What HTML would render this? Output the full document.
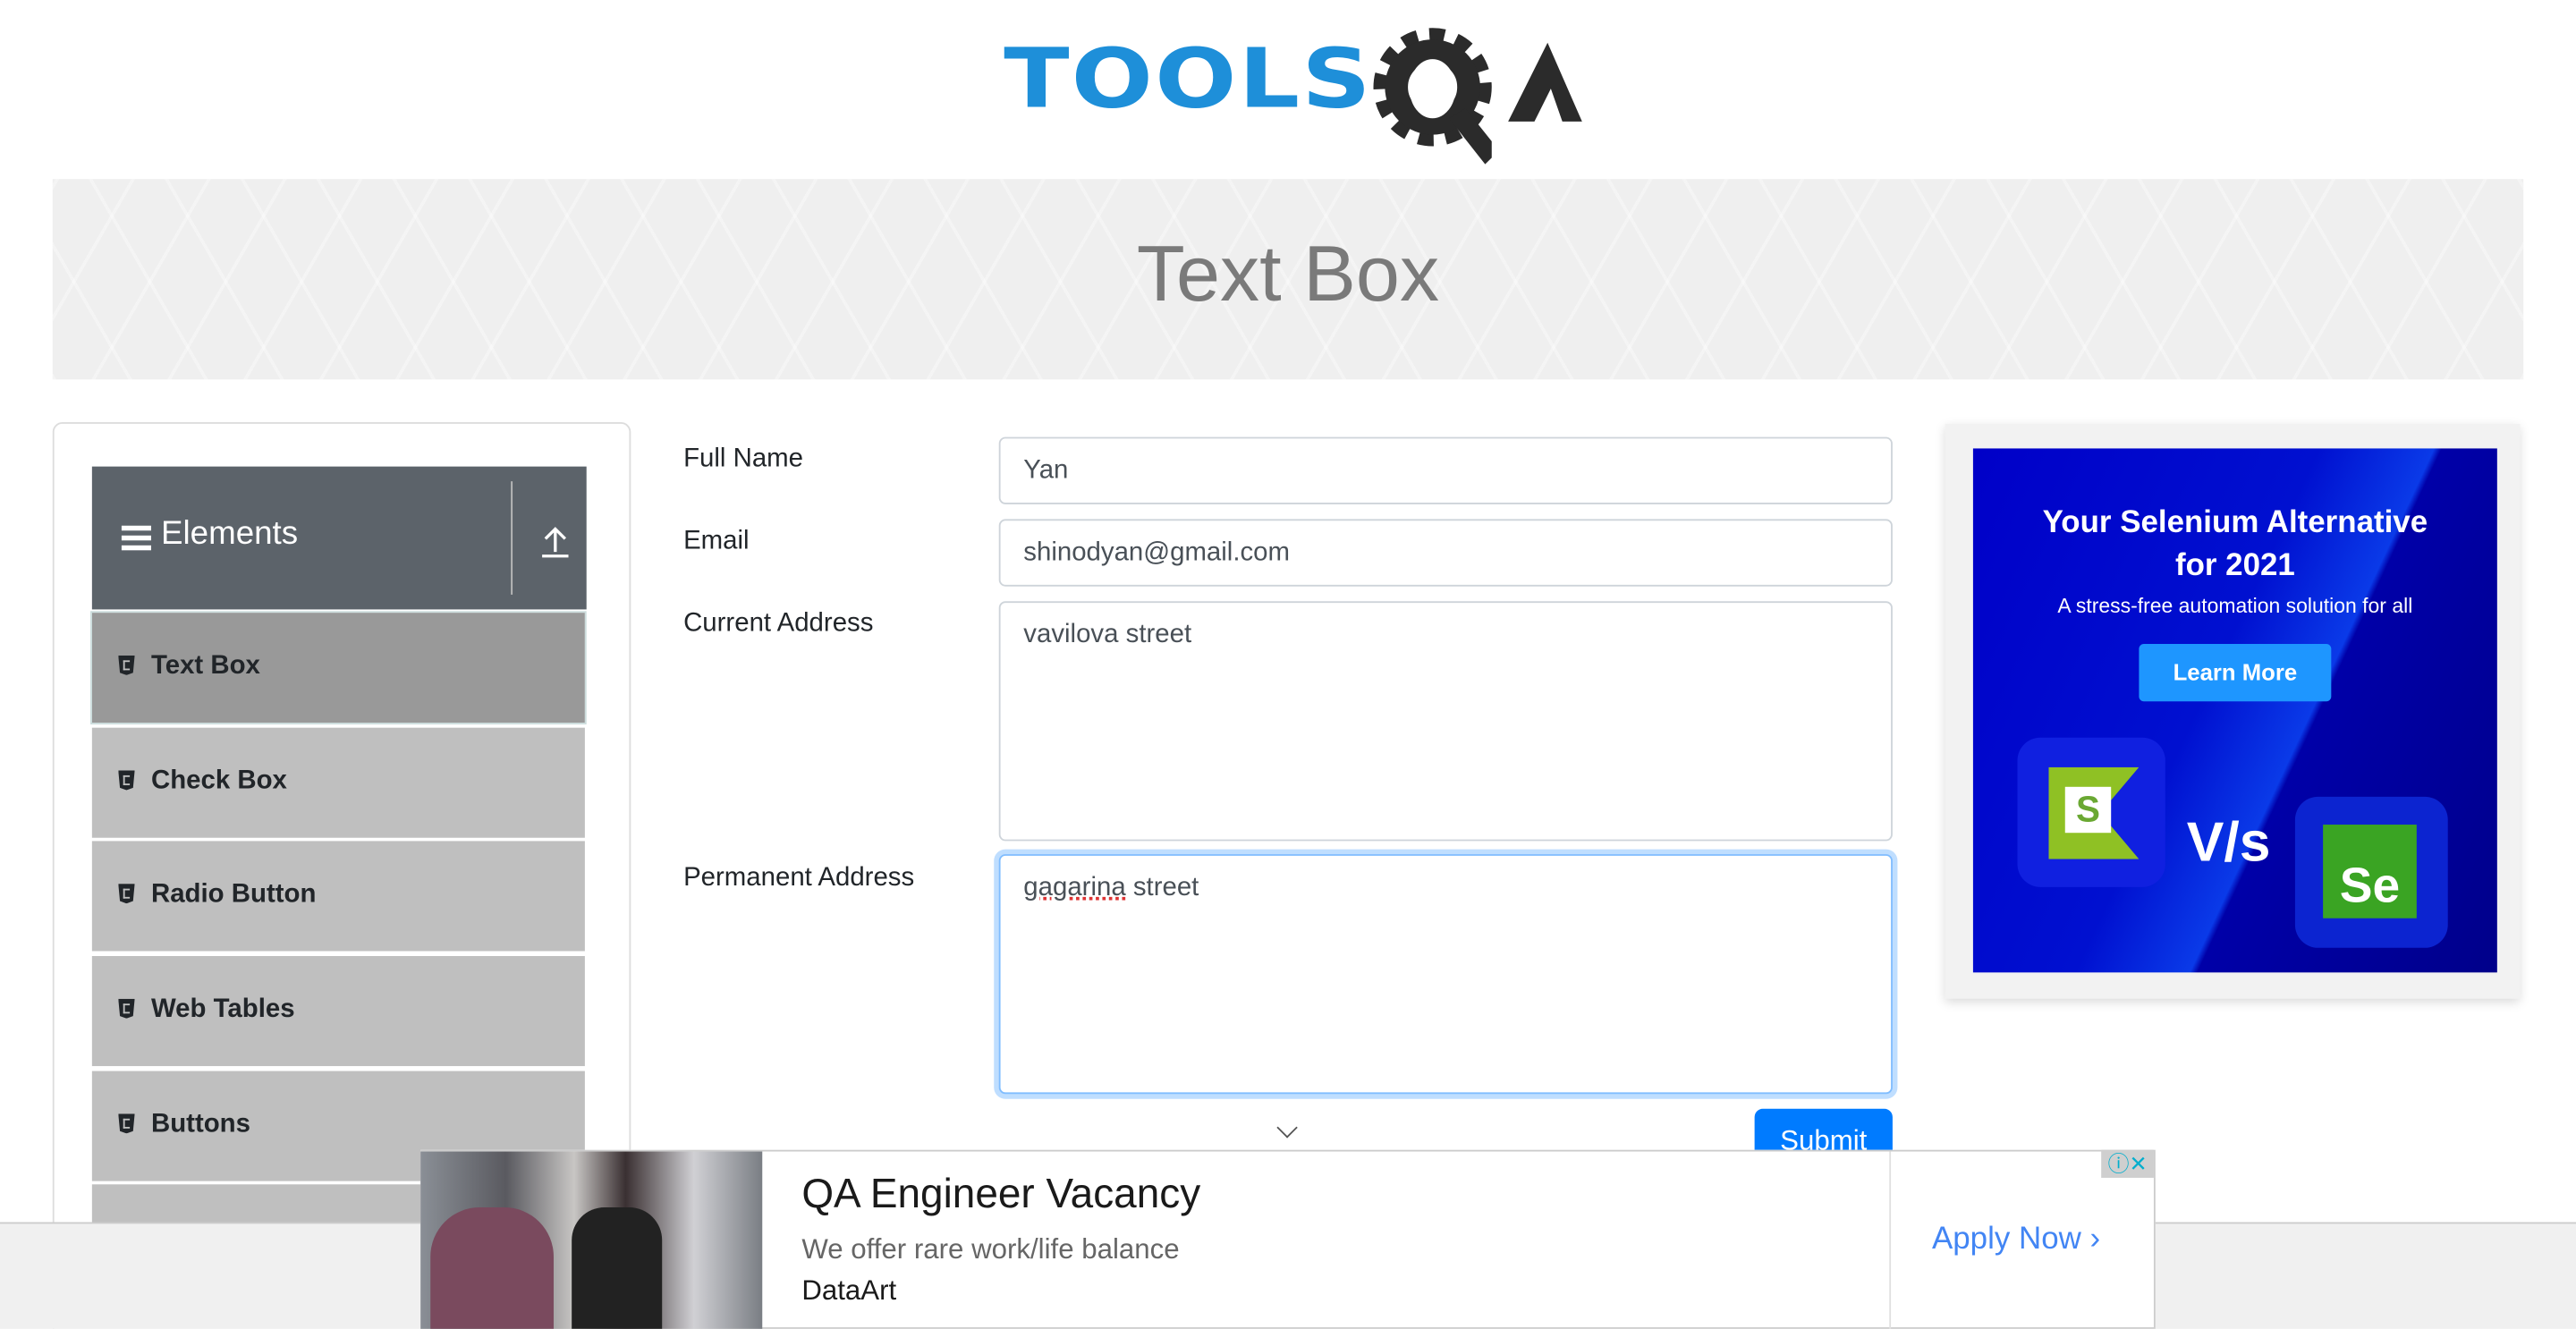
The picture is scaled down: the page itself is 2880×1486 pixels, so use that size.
<!DOCTYPE html>
<html><head><meta charset="utf-8"><style>
html,body{margin:0;padding:0;width:2880px;height:1486px;overflow:hidden;background:#fff;font-family:"Liberation Sans",Arial,sans-serif}
#o{position:absolute;left:0;top:0;width:2880px;height:1486px;overflow:hidden}
#w{position:absolute;left:0;top:0;width:1568px;height:809px;overflow:hidden;transform:scale(1.83673);transform-origin:0 0}
.a{position:absolute}
.lbl{position:absolute;left:416px;font-size:16px;color:#212529}
.inp{position:absolute;left:608px;width:544px;border:1px solid #ced4da;border-radius:4px;background:#fff;font-size:16px;color:#495057;box-sizing:border-box;padding:11px 14px}
.item{position:absolute;left:56px;width:300px;height:67px;background:#bfbfbf;font-weight:bold;font-size:16px;color:#212529;box-sizing:border-box;padding:24px 0 0 16px}
.sh{display:inline-block;width:10px;height:12px;background:#212529;clip-path:polygon(0 0,100% 0,90% 88%,50% 100%,10% 88%);margin-right:10px;vertical-align:-1px;position:relative}
.sh:after{content:"";position:absolute;left:3px;top:3px;width:4px;height:6px;border:1.3px solid #bfbfbf;border-width:1.3px 0 1.3px 1.3px;box-sizing:border-box}
</style></head><body><div id="o"><div id="w">
<!-- logo -->
<div class="a" style="left:611px;top:22px;font-weight:bold;font-size:50px;letter-spacing:1px;color:#1e8fd9;font-family:'DejaVu Sans',sans-serif;line-height:52px;transform:scaleX(1.17);transform-origin:0 0">TOOLS</div>
<svg class="a" style="left:832px;top:16px" width="135" height="84" viewBox="0 0 135 84">
<circle cx="40" cy="37" r="31" fill="none" stroke="#2b2b2b" stroke-width="10" stroke-dasharray="9 7"/>
<circle cx="40" cy="37" r="22" fill="none" stroke="#2b2b2b" stroke-width="14"/>
<ellipse cx="40" cy="38" rx="14" ry="18" fill="#fff"/>
<path d="M50 56 L72 84 L76 80 L76 70 L60 50Z" fill="#2b2b2b"/>
<path fill-rule="evenodd" d="M86 58 L110 10 L131 58 Z M102 58 L112 38 L119 58 Z" fill="#2b2b2b"/>
</svg>
<!-- banner -->
<div class="a" style="left:32px;top:109px;width:1504px;height:122px;background:#efefef;background-image:repeating-linear-gradient(60deg,rgba(255,255,255,.35) 0 2px,transparent 2px 40px),repeating-linear-gradient(-60deg,rgba(255,255,255,.35) 0 2px,transparent 2px 40px)"></div>
<div class="a" style="left:0;width:1568px;top:138px;text-align:center;font-size:48px;color:#7a7a7a;line-height:60px">Text Box</div>
<!-- sidebar -->
<div class="a" style="left:32px;top:257px;width:350px;height:560px;border:1px solid #ddd;border-radius:6px"></div>
<div class="a" style="left:56px;top:284px;width:301px;height:87px;background:#5c636a;color:#fff;font-size:20px">
<div class="a" style="left:18px;top:36px;width:18px;height:3px;background:#fff;box-shadow:0 6px #fff,0 12px #fff"></div>
<div class="a" style="left:42px;top:30px">Elements</div>
<div class="a" style="left:255px;top:9px;width:1px;height:69px;background:#bbb"></div>
<svg class="a" style="left:273px;top:36px" width="18" height="20" viewBox="0 0 18 20"><path d="M9 16V2M3 8l6-6 6 6M1 18.5h16" stroke="#fff" stroke-width="1.8" fill="none"/></svg></div>
<div class="item" style="top:373px;background:#999;outline:1px solid #cdd"><span class="sh"></span>Text Box</div>
<div class="item" style="top:443px"><span class="sh"></span>Check Box</div>
<div class="item" style="top:512px"><span class="sh"></span>Radio Button</div>
<div class="item" style="top:582px"><span class="sh"></span>Web Tables</div>
<div class="item" style="top:652px"><span class="sh"></span>Buttons</div>
<div class="item" style="top:721px;height:40px"></div>
<!-- form -->
<div class="lbl" style="top:271px">Full Name</div>
<div class="inp" style="top:266px;height:41px">Yan</div>
<div class="lbl" style="top:321px">Email</div>
<div class="inp" style="top:316px;height:41px">shinodyan@gmail.com</div>
<div class="lbl" style="top:371px">Current Address</div>
<div class="inp" style="top:366px;height:146px">vavilova street</div>
<div class="lbl" style="top:526px">Permanent Address</div>
<div class="inp" style="top:520px;height:146px;border:1px solid #80bdff;box-shadow:0 0 0 3px rgba(0,123,255,.25)"><span style="text-decoration:underline dotted #d33;text-decoration-thickness:1.5px">gagarina</span> street</div>
<div class="a" style="left:779px;top:682px;width:8px;height:8px;border-right:1.5px solid #555;border-bottom:1.5px solid #555;transform:rotate(45deg)"></div>
<div class="a" style="left:1068px;top:675px;width:84px;height:40px;background:#007bff;border-radius:5px;color:#fff;font-size:17px;text-align:center;line-height:40px">Submit</div>
<!-- right ad -->
<div class="a" style="left:1184px;top:258px;width:350px;height:350px;background:#f2f2f2;box-shadow:0 2px 6px rgba(0,0,0,.15)"></div>
<div class="a" style="left:1201px;top:273px;width:319px;height:319px;background:linear-gradient(115deg,#0000c8 0%,#0010d0 45%,#0a3ae8 60%,#0000a8 61%,#00008a 100%);overflow:hidden;color:#fff;text-align:center">
<div class="a" style="left:0;width:319px;top:33px;font-weight:bold;font-size:19px;line-height:26px">Your Selenium Alternative<br>for 2021</div>
<div class="a" style="left:0;width:319px;top:89px;font-size:12.5px">A stress-free automation solution for all</div>
<div class="a" style="left:101px;top:119px;width:117px;height:35px;background:#1e96ff;border-radius:3px;font-weight:bold;font-size:14px;line-height:35px">Learn More</div>
<div class="a" style="left:27px;top:176px;width:90px;height:91px;background:#1020e0;border-radius:14px"></div>
<div class="a" style="left:46px;top:194px;width:55px;height:56px;background:#8fc124;clip-path:polygon(0 0,100% 0,57% 50%,100% 100%,0 100%)"></div>
<div class="a" style="left:56px;top:206px;width:28px;height:28px;background:#fff;color:#6aa832;font-weight:bold;font-size:22px;line-height:28px">S</div>
<div class="a" style="left:130px;top:220px;font-weight:bold;font-size:34px;line-height:40px">V/s</div>
<div class="a" style="left:196px;top:212px;width:93px;height:92px;background:#0c24d0;border-radius:14px"></div>
<div class="a" style="left:213px;top:229px;width:57px;height:57px;background:#3aa423;font-weight:bold;font-size:30px;line-height:76px">Se</div>
</div>
<!-- bottom bar -->
<div class="a" style="left:0;top:744px;width:1568px;height:65px;background:#f0f0f0;border-top:1px solid #ccc"></div>
<div class="a" style="left:256px;top:700px;width:1056px;height:109px;background:#fff;border:1px solid #ccc;box-sizing:border-box"></div>
<div class="a" style="left:256px;top:701px;width:208px;height:108px;background:linear-gradient(90deg,#8a8f96 0%,#5a5a60 25%,#c8c6c4 45%,#3a3032 60%,#d0d0d4 80%,#7a7e84 100%)"></div>
<div class="a" style="left:262px;top:735px;width:75px;height:74px;background:#7a4a5e;border-radius:30px 30px 0 0"></div>
<div class="a" style="left:348px;top:735px;width:55px;height:74px;background:#222;border-radius:20px 20px 0 0"></div>
<div class="a" style="left:488px;top:713px;font-size:25px;color:#1a1a1a">QA Engineer Vacancy</div>
<div class="a" style="left:488px;top:751px;font-size:17px;color:#666">We offer rare work/life balance</div>
<div class="a" style="left:488px;top:776px;font-size:17px;color:#1a1a1a">DataArt</div>
<div class="a" style="left:1150px;top:701px;width:1px;height:108px;background:#e0e0e0"></div>
<div class="a" style="left:1176px;top:744px;font-size:19px;color:#4285f4">Apply Now ›</div>
<div class="a" style="left:1279px;top:700px;width:32px;height:17px;background:#cfcfcf;color:#00aecd;font-size:13px;line-height:17px;text-align:center">ⓘ✕</div>
</div></div></body></html>
